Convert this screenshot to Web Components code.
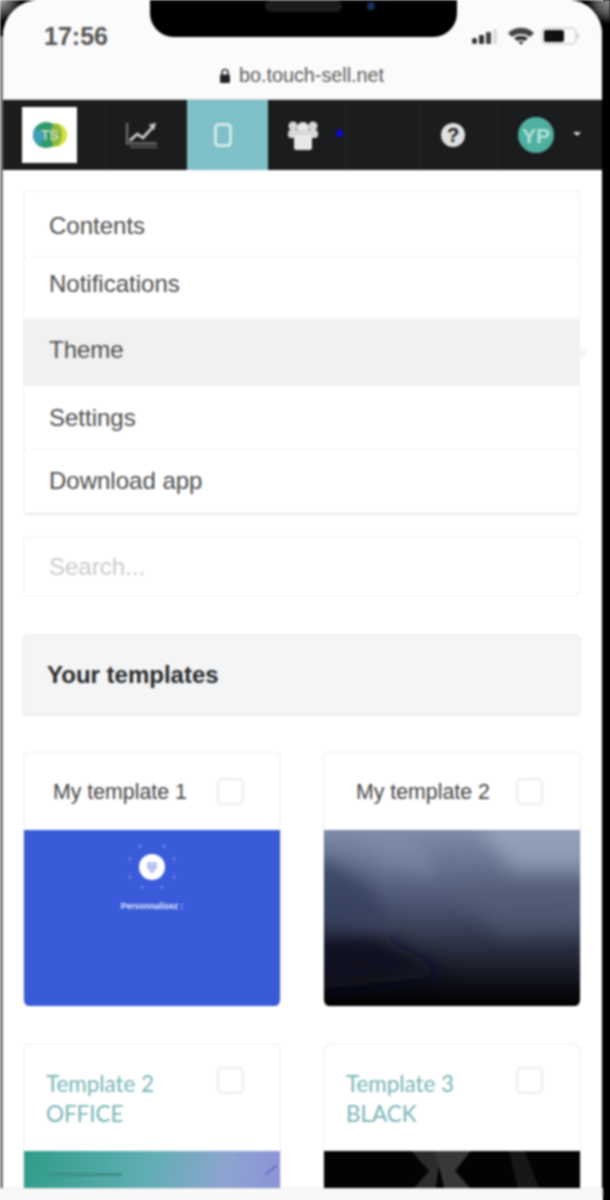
<!DOCTYPE html>
<html lang="en">
<head>
<meta charset="utf-8">
<title>Templates</title>
<style>
  html, body { margin: 0; background: linear-gradient(to right, #fff 603px, #000 603px); }
  body { font-family: "Liberation Sans", Arial, sans-serif; }
</style>
</head>
<body>
<phone-frame>
  <status-bar time="17:56"></status-bar>
  <url-bar host="bo.touch-sell.net"></url-bar>
  <top-nav></top-nav>
  <main-panel>
    <side-menu>
      <menu-item height="67" shift="2">Contents</menu-item>
      <menu-item height="61" shift="-4">Notifications</menu-item>
      <menu-item height="67" shift="-3" active>Theme</menu-item>
      <menu-item height="65" shift="0">Settings</menu-item>
      <menu-item height="62" shift="-1">Download app</menu-item>
    </side-menu>
    <search-box placeholder="Search..."></search-box>
    <section-heading>Your templates</section-heading>
    <template-grid>
      <template-card theme="blue">My template 1</template-card>
      <template-card theme="dusk">My template 2</template-card>
      <template-card theme="office" accent>Template 2<br>OFFICE</template-card>
      <template-card theme="black" accent>Template 3<br>BLACK</template-card>
    </template-grid>
  </main-panel>
</phone-frame>

<script>
class PhoneFrame extends HTMLElement {
  constructor() {
    super();
    this.attachShadow({ mode: "open" });
  }

  connectedCallback() {
    this.shadowRoot.innerHTML = /*html*/ `
      <style>
        :host {
          display: block;
          position: relative;
          width: 610px;
          height: 1200px;
          overflow: hidden;
          background:
            radial-gradient(circle at 0 0, #aaa 0, #444 14px, #000 22px) 0 0 / 60px 60px no-repeat,
            radial-gradient(circle at 100% 0, #999 0, #555 14px, #000 24px) 100% 0 / 60px 60px no-repeat,
            #000;
          filter: blur(0.9px);
        }
        .edge {
          position: absolute;
          left: 0;
          top: 36px;
          width: 3px;
          height: 1152px;
          background: #777;
        }
        .screen {
          display: flex;
          flex-direction: column;
          height: 1200px;
          margin: 0 8px 0 3px;
          overflow: hidden;
          background: #fff;
          border-radius: 36px 34px 0 0;
        }
        .strip {
          position: absolute;
          left: 0;
          bottom: 0;
          width: 603px;
          height: 11px;
          background: #f8f8f8;
          border-top: 1px solid #ececec;
        }
        .notch {
          position: absolute;
          left: 150px;
          top: -2px;
          width: 307px;
          height: 39px;
          background: #000;
          border-radius: 0 0 24px 24px;
        }
        .speaker {
          position: absolute;
          left: 115px;
          top: 2px;
          width: 77px;
          height: 12px;
          border-radius: 6px;
          background: #1c1c1c;
        }
        .camera {
          position: absolute;
          left: 217px;
          top: 4px;
          width: 8px;
          height: 8px;
          border-radius: 50%;
          background: #17305e;
        }
      </style>
      <div class="edge"></div>
      <div class="screen"><slot></slot></div>
      <div class="strip"></div>
      <div class="notch"><div class="speaker"></div><div class="camera"></div></div>
    `;
  }
}

class StatusBar extends HTMLElement {
  constructor() {
    super();
    this.attachShadow({ mode: "open" });
  }

  connectedCallback() {
    this.shadowRoot.innerHTML = /*html*/ `
      <style>
        :host {
          display: flex;
          flex: none;
          align-items: center;
          justify-content: space-between;
          height: 50px;
          padding: 22px 22px 0 41px;
          box-sizing: border-box;
          background: #fbfbfb;
        }
        .time {
          font: 700 25px "Liberation Sans", Arial, sans-serif;
          color: #555;
          position: relative;
        }
        svg { display: block; }
      </style>
      <span class="time">${this.getAttribute("time")}</span>
      <svg width="108" height="24" viewBox="0 0 108 24">
        <rect x="0" y="14" width="5" height="6" rx="2" fill="#333"/>
        <rect x="7" y="11" width="5" height="9" rx="1" fill="#333"/>
        <rect x="14" y="8" width="5" height="12" rx="1" fill="#444"/>
        <rect x="21" y="5" width="4" height="15" rx="1" fill="#ddd"/>
        <path d="M36 9 C43 2 55 2 62 9 L58 13 C53 9 45 9 40 13 Z" fill="#444"/>
        <path d="M42 14 C46 11 52 11 56 14 L53 17 C51 15.500 47 15.500 45 17 Z" fill="#333"/>
        <path d="M46.500 18 C48 17 50 17 51.500 18 L49 21 Z" fill="#333"/>
        <rect x="70" y="4" width="34" height="16" rx="5" fill="none" stroke="#ddd" stroke-width="2"/>
        <rect x="72" y="6" width="20" height="12" rx="2" fill="#111"/>
        <path d="M105 9 L108 12 L105 15 Z" fill="#ccc"/>
      </svg>
    `;
  }
}

class UrlBar extends HTMLElement {
  constructor() {
    super();
    this.attachShadow({ mode: "open" });
  }

  connectedCallback() {
    this.shadowRoot.innerHTML = /*html*/ `
      <style>
        :host {
          display: flex;
          flex: none;
          align-items: center;
          justify-content: center;
          gap: 8px;
          height: 50px;
          padding: 2px 2px 0 0;
          box-sizing: border-box;
          background: #fbfbfb;
          border-bottom: 1px solid #ccc;
          font: 19.8px "Liberation Sans", Arial, sans-serif;
          color: #5c5c5c;
        }
        svg { display: block; }
      </style>
      <svg width="12" height="16" viewBox="0 0 12 16">
        <path d="M3 7 V4.500 a3 3 0 0 1 6 0 V7" fill="none" stroke="#333" stroke-width="1.600"/>
        <rect x="1" y="6.500" width="10" height="8.500" rx="1.500" fill="#222"/>
      </svg>
      <span>${this.getAttribute("host")}</span>
    `;
  }
}

class TopNav extends HTMLElement {
  constructor() {
    super();
    this.attachShadow({ mode: "open" });
  }

  connectedCallback() {
    this.shadowRoot.innerHTML = /*html*/ `
      <style>
        :host {
          display: flex;
          flex: none;
          height: 70px;
          background: #1b1c1e;
          font-family: "Liberation Sans", Arial, sans-serif;
        }
        .cell {
          display: flex;
          align-items: center;
          justify-content: center;
          position: relative;
          box-sizing: border-box;
          border-right: 1px solid #232426;
        }
        .active { background: #7fbfc8; border-right: 0; }
        .logo {
          display: flex;
          align-items: center;
          justify-content: center;
          width: 55px;
          height: 56px;
          margin-left: 19px;
          margin-right: auto;
          background: #fff;
        }
        .dot {
          position: absolute;
          left: 68px;
          top: 30px;
          width: 7px;
          height: 7px;
          border-radius: 50%;
          background: #0a0ae0;
        }
        .help {
          width: 24px;
          height: 24px;
          margin-left: -10px;
          border-radius: 50%;
          background: #e0e0e0;
          color: #222;
          font: 700 20px/24px "Liberation Sans", Arial, sans-serif;
          text-align: center;
        }
        .avatar {
          width: 36px;
          height: 36px;
          margin-left: 21px;
          margin-right: auto;
          border-radius: 50%;
          background: #4fb0a0;
          color: #b4e2dc;
          font: 700 21px/37px "Liberation Sans", Arial, sans-serif;
          text-align: center;
        }
        .caret {
          position: absolute;
          left: 76px;
          top: 32px;
          width: 0;
          height: 0;
          border: 4px solid transparent;
          border-top-color: #ddd;
          border-bottom: 0;
        }
        svg { display: block; }
      </style>
      <div class="cell" style="width:102px">
        <div class="logo">
          <svg width="36" height="30" viewBox="0 0 36 30">
            <ellipse cx="22" cy="15" rx="13" ry="12" fill="#d7e23a"/>
            <ellipse cx="14" cy="15" rx="13" ry="13" fill="#2f9a6e"/>
            <path d="M3 8 A13 13 0 0 0 7 26 L13 15 Z" fill="#3f9fb8"/>
            <ellipse cx="24" cy="15" rx="6" ry="11" fill="#8cb83c"/>
            <text x="18" y="20" font-size="14" font-weight="700" font-family="Liberation Sans" text-anchor="middle" fill="#bfd8c8">TS</text>
          </svg>
        </div>
      </div>
      <div class="cell" style="width:82px">
        <svg style="margin-left:-7px" width="34" height="28" viewBox="0 0 36 30">
          <path d="M2 2 V24 H34" fill="none" stroke="#6e6e6e" stroke-width="2.500"/>
          <path d="M5 21 L13 14 L19 18 L30 6" fill="none" stroke="#c8c8c8" stroke-width="3"/>
          <path d="M25 4 L33 2 L31 10 Z" fill="#c8c8c8"/>
          <path d="M5 28 H34" stroke="#5c5c5c" stroke-width="2"/>
        </svg>
      </div>
      <div class="cell active" style="width:81px">
        <svg style="margin-left:-9px" width="18" height="24" viewBox="0 0 18 24">
          <rect x="1.500" y="1.500" width="15" height="21" rx="3" fill="none" stroke="#dff0f2" stroke-width="2.500"/>
        </svg>
      </div>
      <div class="cell" style="width:79px">
        <div style="margin-left:-9px">
          <svg width="32" height="32" viewBox="0 0 32 32">
            <circle cx="6" cy="7" r="4.500" fill="#d8d8d8"/>
            <circle cx="26" cy="7" r="4.500" fill="#d8d8d8"/>
            <circle cx="16" cy="9" r="6" fill="#e8e8e8"/>
            <rect x="1" y="11" width="30" height="8" rx="3" fill="#d8d8d8"/>
            <rect x="7" y="16" width="18" height="15" rx="2.500" fill="#e8e8e8"/>
          </svg>
        </div>
        <div class="dot"></div>
      </div>
      <div class="cell" style="width:73px"></div>
      <div class="cell" style="width:77px"><div class="help">?</div></div>
      <div class="cell" style="width:105px;border-right:0">
        <div class="avatar">YP</div>
        <div class="caret"></div>
      </div>
    `;
  }
}

class MainPanel extends HTMLElement {
  constructor() {
    super();
    this.attachShadow({ mode: "open" });
  }

  connectedCallback() {
    this.shadowRoot.innerHTML = /*html*/ `
      <style>
        :host {
          display: flex;
          flex-direction: column;
          flex: 1;
          min-height: 0;
          padding: 20px 21px 0 20px;
          overflow: hidden;
          background: #fff;
        }
      </style>
      <slot></slot>
    `;
  }
}

class SideMenu extends HTMLElement {
  constructor() {
    super();
    this.attachShadow({ mode: "open" });
  }

  connectedCallback() {
    this.shadowRoot.innerHTML = /*html*/ `
      <style>
        :host {
          display: block;
          flex: none;
          position: relative;
          margin-right: 1px;
          border: 1px solid #eee;
          border-bottom: 2px solid #e8e8e8;
          border-radius: 5px;
        }
      </style>
      <slot></slot>
    `;
  }
}

class MenuItem extends HTMLElement {
  constructor() {
    super();
    this.attachShadow({ mode: "open" });
  }

  connectedCallback() {
    const height = this.getAttribute("height");
    const shift = this.getAttribute("shift");
    this.shadowRoot.innerHTML = /*html*/ `
      <style>
        :host {
          display: flex;
          align-items: center;
          position: relative;
          box-sizing: border-box;
          height: ${height}px;
          padding-left: 25px;
          border-bottom: 1px solid #f5f5f5;
          font: 24px "Liberation Sans", Arial, sans-serif;
          color: #4d4d4d;
        }
        :host([active]) { background: #f1f1f1; border-bottom: 0; }
        :host(:last-child) { border-bottom: 0; }
        .text { position: relative; top: ${shift}px; }
        .arrow {
          display: none;
          position: absolute;
          right: -8px;
          top: 26px;
          width: 0;
          height: 0;
          border-left: 8px solid #f3f3f3;
          border-top: 8px solid transparent;
          border-bottom: 8px solid transparent;
        }
        :host([active]) .arrow { display: block; }
      </style>
      <span class="text"><slot></slot></span>
      <div class="arrow"></div>
    `;
  }
}

class SearchBox extends HTMLElement {
  constructor() {
    super();
    this.attachShadow({ mode: "open" });
  }

  connectedCallback() {
    this.shadowRoot.innerHTML = /*html*/ `
      <style>
        :host {
          display: flex;
          flex: none;
          margin: 22px 1px 0 0;
        }
        input {
          display: block;
          width: 100%;
          height: 60px;
          box-sizing: border-box;
          padding: 0 25px;
          border: 1.500px solid #f1f1f1;
          border-radius: 5px;
          outline: 0;
          font: 24px "Liberation Sans", Arial, sans-serif;
          background: #fff;
        }
        input::placeholder { color: #cbcbcb; opacity: 1; }
      </style>
      <input type="text" placeholder="${this.getAttribute("placeholder")}">
    `;
  }
}

class SectionHeading extends HTMLElement {
  constructor() {
    super();
    this.attachShadow({ mode: "open" });
  }

  connectedCallback() {
    this.shadowRoot.innerHTML = /*html*/ `
      <style>
        :host {
          display: flex;
          flex: none;
          align-items: center;
          box-sizing: border-box;
          height: 82px;
          margin: 37px 0 0 -1px;
          padding: 1px 0 0 24px;
          background: #f3f5f6;
          border: 1px solid #eee;
          border-bottom: 2px solid #ebebeb;
          border-radius: 5px;
          font: 700 24px "Liberation Sans", Arial, sans-serif;
          color: #2b2b2b;
        }
      </style>
      <slot></slot>
    `;
  }
}

class TemplateGrid extends HTMLElement {
  constructor() {
    super();
    this.attachShadow({ mode: "open" });
  }

  connectedCallback() {
    this.shadowRoot.innerHTML = /*html*/ `
      <style>
        :host {
          display: grid;
          flex: none;
          grid-template-columns: 258px 258px;
          justify-content: space-between;
          gap: 38px 0;
          margin-top: 36px;
        }
      </style>
      <slot></slot>
    `;
  }
}

// the preview images of the cards, they are only gradients and a few blurred shapes
const PREVIEWS = {
  blue: /*html*/ `
    <div class="blue">
      <svg width="60" height="60" viewBox="0 0 60 60">
        <g fill="#5a78e0">
          <circle cx="18" cy="7" r="2"/><circle cx="42" cy="7" r="2"/>
          <circle cx="8" cy="20" r="2"/><circle cx="52" cy="20" r="2"/>
          <circle cx="8" cy="38" r="2"/><circle cx="52" cy="38" r="2"/>
          <circle cx="20" cy="48" r="2"/><circle cx="40" cy="48" r="2"/>
        </g>
        <circle cx="30" cy="28" r="13" fill="#fff"/>
        <path d="M25 23 h10 v6 l-5 6 l-5 -6 Z" fill="#b9c6f2"/>
      </svg>
      <span>Personnalisez :</span>
    </div>`,
  dusk: /*html*/ `
    <svg class="fill" viewBox="0 0 258 176" preserveAspectRatio="none">
      <defs>
        <linearGradient id="sky" x1="0" y1="0" x2="0" y2="1">
          <stop offset="0" stop-color="#7f8ba8"/>
          <stop offset=".42" stop-color="#4c5672"/>
          <stop offset=".7" stop-color="#262b3b"/>
          <stop offset=".9" stop-color="#0b0c12"/>
          <stop offset="1" stop-color="#020203"/>
        </linearGradient>
        <filter id="soft" x="-20%" y="-20%" width="140%" height="140%"><feGaussianBlur stdDeviation="9"/></filter>
      </defs>
      <rect width="258" height="176" fill="url(#sky)"/>
      <g filter="url(#soft)">
        <path d="M20 -10 H90 L115 45 L60 35 Z" fill="#7f8cab" opacity=".6"/>
        <path d="M150 -10 H268 V40 L190 40 Z" fill="#a5b1c8" opacity=".6"/>
        <path d="M-10 25 L40 50 L70 90 L-10 105 Z" fill="#343e5d" opacity=".8"/>
        <path d="M130 60 L268 50 V100 L180 105 Z" fill="#585f77" opacity=".55"/>
        <path d="M-10 100 L60 108 L125 145 L-10 160 Z" fill="#10121c" opacity=".9"/>
      </g>
    </svg>`,
  office: /*html*/ `
    <div class="office"><i></i><b></b></div>`,
  black: /*html*/ `
    <svg class="fill" viewBox="0 0 258 176" preserveAspectRatio="none">
      <rect width="258" height="176" fill="#030303"/>
      <path d="M88 0 H118 L112 40 H88 L106 20 Z" fill="#2c2c2c"/>
      <path d="M112 0 H148 L132 20 L150 40 H122 Z" fill="#383838"/>
      <path d="M186 0 H202 L218 40 H196 Z" fill="#171717"/>
    </svg>`
};

class TemplateCard extends HTMLElement {
  constructor() {
    super();
    this.attachShadow({ mode: "open" });
  }

  connectedCallback() {
    const theme = this.getAttribute("theme");
    this.shadowRoot.innerHTML = /*html*/ `
      <style>
        :host {
          display: block;
          box-sizing: border-box;
          height: 254px;
          overflow: hidden;
          border: 1.500px solid #eeeeee;
          border-bottom: 0;
          border-radius: 6px;
          background: #fff;
        }
        .head {
          display: flex;
          align-items: center;
          box-sizing: border-box;
          height: 76.500px;
          padding: 2px 36px 0 29px;
          font: 21.3px "Liberation Sans", Arial, sans-serif;
          color: #444;
        }
        :host(:nth-child(even)) .head { padding-left: 32px; padding-right: 37px; }
        .title { flex: 1; }
        .check {
          width: 27px;
          height: 27px;
          margin-top: -2px;
          box-sizing: border-box;
          border: 2px solid #ededed;
          border-radius: 5px;
          background: #fff;
        }
        :host([accent]) .head {
          align-items: flex-start;
          height: 105.500px;
          padding: 24px 36px 0 22px;
          font: 22.4px/30px Lato, "Liberation Sans", sans-serif;
          color: #78b5b6;
        }
        :host([accent]:nth-child(even)) .head { padding-left: 22px; padding-right: 37px; }
        .preview { height: 176px; position: relative; overflow: hidden; }
        .fill { display: block; width: 100%; height: 100%; }
        .blue {
          display: flex;
          flex-direction: column;
          align-items: center;
          height: 100%;
          padding-top: 9px;
          box-sizing: border-box;
          background: #3a5bd9;
          color: #dfe6fb;
          font: 700 8.5px "Liberation Sans", Arial, sans-serif;
        }
        .blue svg { display: block; margin-bottom: 2px; }
        .office {
          height: 100%;
          background: linear-gradient(100deg, #2f9d88 0, #62aeb4 45%, #8ea4d0 72%, #8a8bdc 100%);
        }
        .office i {
          display: block;
          position: absolute;
          left: 23px;
          top: 22px;
          width: 75px;
          height: 3px;
          background: #3d8f86;
        }
        .office b {
          display: block;
          position: absolute;
          right: 2px;
          top: 18px;
          width: 14px;
          height: 2px;
          background: #6b6cb8;
          transform: rotate(-40deg);
        }
      </style>
      <div class="head">
        <div class="title"><slot></slot></div>
        <div class="check"></div>
      </div>
      <div class="preview">${PREVIEWS[theme]}</div>
    `;
  }
}

customElements.define("phone-frame", PhoneFrame);
customElements.define("status-bar", StatusBar);
customElements.define("url-bar", UrlBar);
customElements.define("top-nav", TopNav);
customElements.define("main-panel", MainPanel);
customElements.define("side-menu", SideMenu);
customElements.define("menu-item", MenuItem);
customElements.define("search-box", SearchBox);
customElements.define("section-heading", SectionHeading);
customElements.define("template-grid", TemplateGrid);
customElements.define("template-card", TemplateCard);
</script>
</body>
</html>
